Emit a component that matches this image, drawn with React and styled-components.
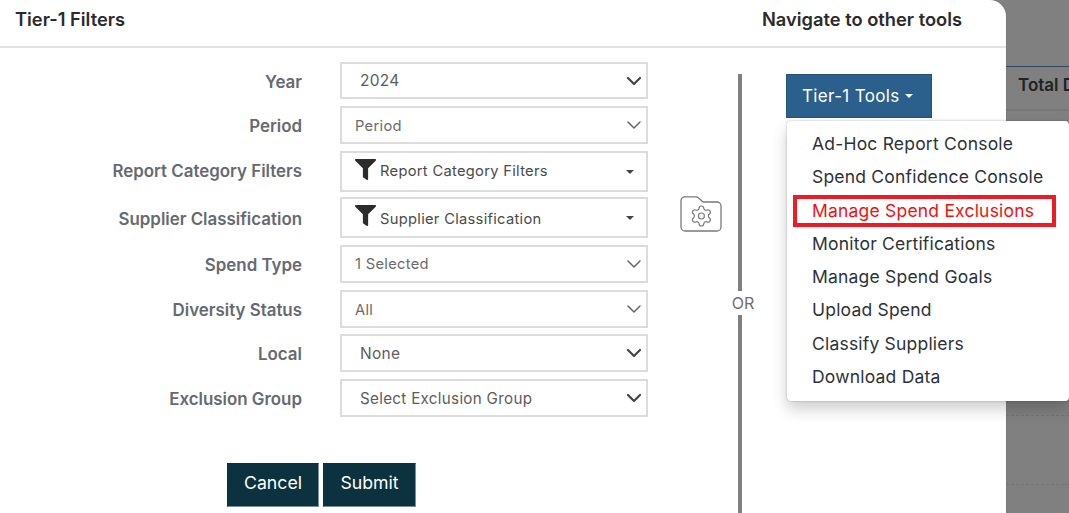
import React from "react";
import styled, { createGlobalStyle } from "styled-components";
import { ChevronDown, Settings } from "lucide-react";
import { FaFilter } from "react-icons/fa";

const GlobalStyle = createGlobalStyle`
  html, body {
    margin: 0;
    padding: 0;
    height: 513px;
    overflow: hidden;
    background: #808080;
    font-family: Inter, "Liberation Sans", sans-serif;
  }
  * { box-sizing: border-box; }
`;

const Page = styled.div`
  display: flex;
  width: 1069px;
  height: 513px;
  overflow: hidden;
  position: relative;
`;

const Modal = styled.div`
  width: 1006px;
  height: 513px;
  flex: none;
  background: #fff;
  border-top-right-radius: 16px;
  box-shadow: 0 0 1px rgba(0, 0, 0, 0.4);
  display: flex;
  flex-direction: column;
`;

const ModalHeader = styled.div`
  height: 48px;
  flex: none;
  border-bottom: 2px solid #e3e3e3;
  display: flex;
  justify-content: space-between;
  padding: 8px 44px 0 15px;
`;

const Title = styled.div`
  font-size: 18.3px;
  line-height: 22px;
  font-weight: 600;
  color: #2b2b2b;
`;

const ModalBody = styled.div`
  flex: 1;
  display: flex;
  min-height: 0;
`;

const FormColumn = styled.div`
  width: 648px;
  flex: none;
  padding-top: 14px;
`;

const Row = styled.div`
  display: grid;
  grid-template-columns: 302px 308px;
  column-gap: 38px;
  align-items: center;
  height: ${(p) => p.$h}px;
  margin-bottom: ${(p) => p.$mb}px;
`;

const Label = styled.div`
  text-align: right;
  font-size: 16.9px;
  font-weight: 600;
  color: #666a70;
  position: relative;
  top: ${(p) => p.$dy}px;
`;

const Select = styled.div`
  height: 100%;
  border: 2px solid #dcdcdc;
  display: flex;
  align-items: center;
  padding: 0 ${(p) => (p.$caret ? "12px" : "0")} 0 ${(p) => p.$pl}px;
  font-size: ${(p) => p.$fs || 14.7}px;
  letter-spacing: 0.3px;
  color: ${(p) => p.$color || "#6b6b6b"};
`;

const SelectText = styled.span`
  flex: 1;
  white-space: nowrap;
  position: relative;
  top: ${(p) => p.$dy}px;
`;

const FilterIcon = styled(FaFilter)`
  width: 21px;
  height: 21px;
  color: #2c2c2c;
  margin-right: 4px;
  position: relative;
  top: -2px;
`;

const Caret = styled.span`
  width: 0;
  height: 0;
  border-left: 4px solid transparent;
  border-right: 4px solid transparent;
  border-top: 4.5px solid ${(p) => p.$color || "#444"};
  margin-left: ${(p) => p.$ml || 0}px;
`;

const Actions = styled.div`
  display: flex;
  gap: 4px;
  margin: 46px 0 0 227px;
`;

const DarkButton = styled.button`
  height: 44px;
  width: ${(p) => p.$w}px;
  background: #0c3240;
  color: #fff;
  border: 1px solid #0c3240;
  border-bottom-color: #7d8f96;
  border-right-color: #7d8f96;
  font-family: inherit;
  font-size: 17.7px;
  font-weight: 400;
  padding: 0 0 6px;
`;

const IconColumn = styled.div`
  width: 90px;
  flex: none;
  padding: 148px 0 0 32px;
`;

const FolderButton = styled.div`
  width: 42px;
  height: 36px;
  color: #7a7a7a;
`;

const DividerColumn = styled.div`
  width: 4px;
  flex: none;
  margin-top: 26px;
  display: flex;
  flex-direction: column;
  position: relative;
`;

const Line = styled.div`
  width: 100%;
  flex: 1;
  background: #808080;
`;

const OrText = styled.div`
  position: absolute;
  top: 217px;
  left: -8px;
  background: #fff;
  padding: 3px 0;
  width: 26px;
  text-align: center;
  font-size: 16px;
  line-height: 18px;
  color: #6f6f6f;
`;

const ToolsColumn = styled.div`
  padding: 26px 0 0 44px;
`;

const ToolsButton = styled.div`
  width: 146px;
  height: 44px;
  background: #2b5f8c;
  border: 1px solid #24547c;
  color: #fff;
  font-size: 17px;
  display: flex;
  align-items: center;
  padding: 0 0 0 15px;
  letter-spacing: 0.35px;
`;

const Menu = styled.div`
  position: absolute;
  left: 787px;
  top: 121px;
  width: 282px;
  height: 280px;
  background: #fff;
  border-radius: 4px;
  padding: 6px 0 0 6px;
  box-shadow: 0 8px 16px rgba(0, 0, 0, 0.2), 0 0 2px rgba(0, 0, 0, 0.3);
  z-index: 5;
`;

const MenuItem = styled.div`
  height: ${(p) => (p.$alert ? 32 : 33.2)}px;
  margin-top: ${(p) => (p.$alert ? 1.6 : 0)}px;
  display: flex;
  align-items: center;
  padding-left: ${(p) => (p.$alert ? 15 : 19)}px;
  width: 263px;
  font-size: 17.5px;
  font-weight: 400;
  letter-spacing: 0.2px;
  white-space: nowrap;
  color: ${(p) => (p.$alert ? "#f01010" : "#2d3238")};
  border: ${(p) => (p.$alert ? "4px solid #ed1c24" : "none")};
`;

const Backdrop = styled.div`
  flex: 1;
  padding-top: 66px;
  min-width: 0;
  overflow: hidden;
`;

const TableHead = styled.div`
  height: 45px;
  border-top: 1px solid #2e4a61;
  border-bottom: 2px solid #767676;
  padding: 8px 0 0 12px;
  font-size: 17px;
  font-weight: 600;
  color: #222;
  white-space: nowrap;
`;

const TableRow = styled.div`
  height: 69px;
  border-bottom: 1px dashed #747474;
  margin-top: ${(p) => p.$mt || 0}px;
`;

const filters = [
  { label: "Year", text: "2024", h: 37, mb: 7, pl: 18, fs: 15.5, color: "#5c5c5c", dark: true, labelDy: 1, textDy: 0 },
  { label: "Period", text: "Period", h: 38, mb: 7, pl: 13, labelDy: 1, textDy: 1 },
  { label: "Report Category Filters", text: "Report Category Filters", h: 41, mb: 5, pl: 13, filter: true, labelDy: -1, textDy: -1 },
  { label: "Supplier Classification", text: "Supplier Classification", h: 41, mb: 7, pl: 13, filter: true, labelDy: 1, textDy: 1 },
  { label: "Spend Type", text: "1 Selected", h: 38, mb: 7, pl: 13, labelDy: 1, textDy: 0 },
  { label: "Diversity Status", text: "All", h: 38, mb: 6, pl: 13, labelDy: 1, textDy: 1 },
  { label: "Local", text: "None", h: 38, mb: 7, pl: 18, fs: 15.5, color: "#5c5c5c", dark: true, labelDy: 1, textDy: 0 },
  { label: "Exclusion Group", text: "Select Exclusion Group", h: 38, mb: 0, pl: 18, fs: 15.2, color: "#5c5c5c", dark: true, labelDy: 1, textDy: 0 },
];

const tools = [
  "Ad-Hoc Report Console",
  "Spend Confidence Console",
  "Manage Spend Exclusions",
  "Monitor Certifications",
  "Manage Spend Goals",
  "Upload Spend",
  "Classify Suppliers",
  "Download Data",
];

const FolderGear = () => (
  <svg width="42" height="36" viewBox="0 0 42 36" fill="none" stroke="currentColor">
    <path
      d="M5 .8h11c1 0 2 .5 2.6 1.2L23 6h14c2.2 0 4 1.8 4 4v21c0 2.2-1.8 4-4 4H5c-2.2 0-4-1.8-4-4V4.8c0-2.2 1.8-4 4-4z"
      strokeWidth="1.3"
    />
    <Settings x="9.4" y="8" width="24" height="24" strokeWidth="1.2" />
  </svg>
);

export default function App() {
  return (
    <Page>
      <GlobalStyle />
      <Modal>
        <ModalHeader>
          <Title>Tier-1 Filters</Title>
          <Title>Navigate to other tools</Title>
        </ModalHeader>
        <ModalBody>
          <FormColumn>
            {filters.map((f) => (
              <Row key={f.label} $h={f.h} $mb={f.mb}>
                <Label $dy={f.labelDy}>{f.label}</Label>
                <Select $pl={f.pl} $fs={f.fs} $color={f.filter ? "#4a4a4a" : f.color} $caret={f.filter}>
                  {f.filter && <FilterIcon />}
                  <SelectText $dy={f.textDy}>{f.text}</SelectText>
                  {f.filter ? (
                    <Caret />
                  ) : (
                    <ChevronDown size={24} strokeWidth={f.dark ? 2.2 : 1.5} color={f.dark ? "#444" : "#666"} />
                  )}
                </Select>
              </Row>
            ))}
            <Actions>
              <DarkButton $w={92}>Cancel</DarkButton>
              <DarkButton $w={93}>Submit</DarkButton>
            </Actions>
          </FormColumn>
          <IconColumn>
            <FolderButton>
              <FolderGear />
            </FolderButton>
          </IconColumn>
          <DividerColumn>
            <Line />
            <OrText>OR</OrText>
          </DividerColumn>
          <ToolsColumn>
            <ToolsButton>
              Tier-1 Tools
              <Caret $color="#fff" $ml={5} />
            </ToolsButton>
          </ToolsColumn>
        </ModalBody>
      </Modal>
      <Backdrop>
        <TableHead>Total Diversity</TableHead>
        <TableRow $mt={236} />
        <TableRow />
      </Backdrop>
      <Menu>
        {tools.map((t) => (
          <MenuItem key={t} $alert={t === "Manage Spend Exclusions"}>
            {t}
          </MenuItem>
        ))}
      </Menu>
    </Page>
  );
}
